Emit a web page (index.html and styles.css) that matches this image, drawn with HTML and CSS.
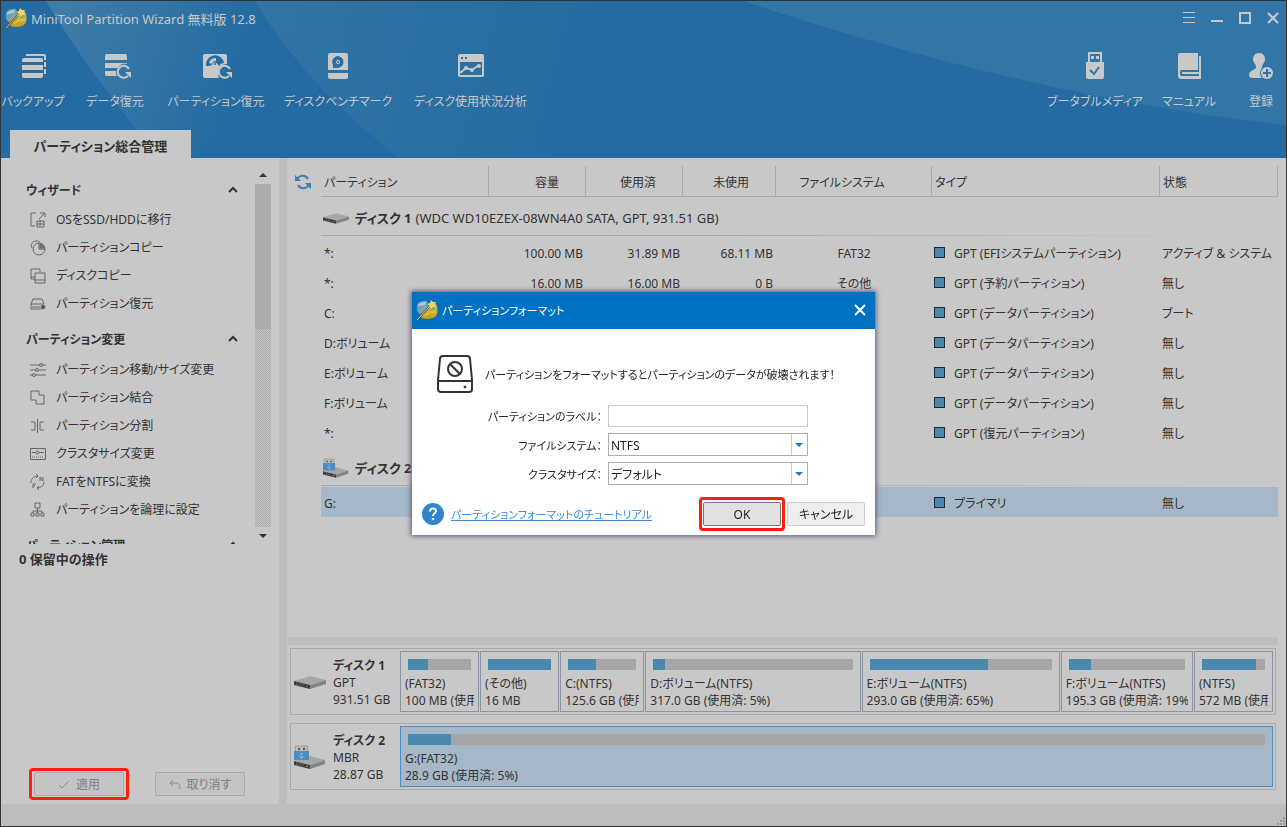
FILE: index.html
```html
<!DOCTYPE html>
<html lang="ja">
<head>
<meta charset="utf-8">
<title>MiniTool Partition Wizard 無料版 12.8</title>
<link rel="stylesheet" href="styles.css">
</head>
<body>
<svg class="defs" aria-hidden="true">
  <defs>
    <linearGradient id="sky" x1="0" y1="0" x2="1" y2="1"><stop offset="0" stop-color="#3e86b8"/><stop offset=".6" stop-color="#7fa9b4"/><stop offset="1" stop-color="#3a7aa0"/></linearGradient>
    <linearGradient id="gold" x1="0" y1="0" x2="0" y2="1"><stop offset="0" stop-color="#d8c653"/><stop offset="1" stop-color="#c79d10"/></linearGradient>
    <symbol id="logo" viewBox="0 0 22 22">
      <path d="M1 6c1-4 6-5 10-4l1 6-8 7C1 13 0 9 1 6z" fill="url(#sky)"/>
      <path d="M2 6c2-3 5-3 8-3l-1 3c-3 0-5 1-7 2z" fill="#a9cbe0"/>
      <path d="M5 14l7-7 8-2c2 4 2 9 0 12-3 3-10 4-14 2-2-1-2-3-1-5z" fill="url(#gold)"/>
      <path d="M14 9l5-2 1 3-5 2z" fill="#8fae60"/>
      <path d="M11 5l3-1 1-3 2 2 3 0-1 3 1 2-3 0-2 2-1-3z" fill="#ecd36d"/>
      <path d="M6 15l4 1 5-3 5 0" fill="none" stroke="#e4cf5c"/>
      <path d="M1 21L13 8" stroke="#4b4432" stroke-width="2"/><path d="M1 21L13 8" stroke="#d9d4be"/>
    </symbol>
    <symbol id="drive" viewBox="0 0 32 14">
      <path d="M0 6L16 1l16 4-16 5z" fill="#a7a7a7"/><path d="M0 6l16 4v4L0 10z" fill="#3c3c3c"/><path d="M16 10l16-5v4l-16 5z" fill="#848484"/>
      <path d="M2 7.500l8 2.500M2 9.500l8 2.500" stroke="#777" stroke-dasharray="1 1"/><path d="M12 11l2 .6" stroke="#4f8a3a"/>
    </symbol>
    <symbol id="usbdrive" viewBox="0 0 32 24">
      <path d="M0 16l16-5 15 4-15 5z" fill="#a7a7a7"/><path d="M0 16l16 4v4L0 20z" fill="#3c3c3c"/><path d="M16 20l15-5v4l-15 5z" fill="#848484"/>
      <path d="M2 17.500l8 2.500M2 19.500l8 2.500" stroke="#777" stroke-dasharray="1 1"/><path d="M12 21l2 .6" stroke="#4fae3a" stroke-width="1.500"/>
      <path d="M1.500 1h12v6h-12z" fill="#bcbcbc" stroke="#999"/><path d="M4 3h2v2H4zM9 3h2v2H9z" fill="#555"/>
      <path d="M0 6h15v9H0z" fill="#4b8dbe"/><path d="M7.500 14V8M5 11l2.500 2 2.500-2M6 8.500h3" fill="none" stroke="#86b4d6"/>
    </symbol>
    <symbol id="up" viewBox="0 0 10 7"><path d="M1 6l4-4 4 4" fill="none" stroke="#333" stroke-width="2"/></symbol>
  </defs>
</svg>

<div class="app">
  <header class="header">
    <svg class="rays" viewBox="0 0 1285 157" preserveAspectRatio="none" aria-hidden="true">
      <defs>
        <linearGradient id="r1" gradientUnits="userSpaceOnUse" x1="60" y1="0" x2="250" y2="60"><stop offset="0" stop-color="#407ca7"/><stop offset="1" stop-color="#236ba2"/></linearGradient>
        <linearGradient id="r2" gradientUnits="userSpaceOnUse" x1="270" y1="0" x2="600" y2="90"><stop offset="0" stop-color="#3174a4"/><stop offset="1" stop-color="#236ba2"/></linearGradient>
      </defs>
      <path d="M45 0C75 50 105 90 136 129l60 28L330 0z" fill="url(#r1)"/>
      <path d="M254 0c35 60 90 115 144 157h250L700 0z" fill="url(#r2)"/>
      <path d="M742 0C920 60 1110 105 1285 124V0z" fill="#3276a7"/>
    </svg>
    <div class="titlebar">
      <svg class="logo"><use href="#logo"/></svg>
      <h1 class="app-title">MiniTool Partition Wizard 無料版 12.8</h1>
      <div class="winctl">
        <button type="button" aria-label="メニュー"><svg viewBox="0 0 12 12"><path d="M0 .5h12M0 5.500h12M0 10.500h12" stroke="#c8c8c8"/></svg></button>
        <button type="button" aria-label="最小化"><svg viewBox="0 0 12 12"><path d="M0 9h12" stroke="#c8c8c8" stroke-width="2"/></svg></button>
        <button type="button" aria-label="最大化"><svg viewBox="0 0 12 12"><path d="M1 1h10v10H1z" fill="none" stroke="#c8c8c8" stroke-width="2"/></svg></button>
        <button type="button" aria-label="閉じる"><svg viewBox="0 0 12 12"><path d="M1 1l10 10M11 1L1 11" stroke="#c8c8c8" stroke-width="2"/></svg></button>
      </div>
    </div>
    <nav class="toolbar">
      <button type="button" class="tool w56"><svg viewBox="-3 0 32 28"><path d="M6 2h18a2 2 0 0 1 2 2v4h-2V4H6zM24 10h2v5h-2zM24 17h2v5h-2z"/><path d="M4 6h17a2 2 0 0 1 2 2v2H2V8a2 2 0 0 1 2-2zM2 13h21v5H2zM2 21h21v3a2 2 0 0 1-2 2H4a2 2 0 0 1-2-2z"/></svg><span>バックアップ</span></button>
      <button type="button" class="tool w58"><svg viewBox="-2 0 32 28"><path d="M6 2h18a2 2 0 0 1 2 2v4H4V4a2 2 0 0 1 2-2zM4 11h22v1c-4-1-7 0-9 4H4zM4 19h11c0 2 0 4 1 5H6a2 2 0 0 1-2-2z"/><path d="M27 24a6 6 0 1 1 1-7" fill="none" stroke="#c8c8c8" stroke-width="2"/><path d="M24 20h6v6z"/></svg><span>データ復元</span></button>
      <button type="button" class="tool w94"><svg viewBox="-2 0 32 28"><path d="M3 2h20a2 2 0 0 1 2 2v8c-5 0-9 3-9 8 0 3 0 5 1 6H3a2 2 0 0 1-2-2V4a2 2 0 0 1 2-2z"/><path d="M4 14a9 9 0 0 1 18-3c-2 0-4 1-5 3a4 4 0 0 0-7-1l-3 1z" fill="#246ca3"/><path d="M7 11c1-4 4-5 7-5v3c-2 0-3 1-4 3z"/><circle cx="13" cy="13" r="2.500"/><circle cx="13" cy="12" r="1" fill="#246ca3"/><path d="M27 24a6 6 0 1 1 1-7" fill="none" stroke="#c8c8c8" stroke-width="2"/><path d="M24 20h6v6z"/></svg><span>パーティション復元</span></button>
      <button type="button" class="tool w100"><svg viewBox="0 0 32 28"><path d="M8 1h16a2 2 0 0 1 2 2v15H6V3a2 2 0 0 1 2-2zM6 21h20v4a2 2 0 0 1-2 2H8a2 2 0 0 1-2-2z"/><path d="M16 4a6 6 0 1 1-1 12h-4v-3A6 6 0 0 1 16 4z" fill="#2a70a4"/><circle cx="16" cy="10" r="2"/><circle cx="16" cy="10" r="1" fill="#2a70a4"/></svg><span>ディスクベンチマーク</span></button>
      <button type="button" class="tool w115"><svg viewBox="0 0 32 28"><path d="M5 2h22a2 2 0 0 1 2 2v19a2 2 0 0 1-2 2H5a2 2 0 0 1-2-2V4a2 2 0 0 1 2-2z"/><path d="M5 10h22v13H5zM6 5h2v2H6zM10 5h2v2h-2z" fill="#2a70a4"/><path d="M5 21l6-5 6 2 7-5" fill="none" stroke="#c8c8c8" stroke-width="2"/><circle cx="11" cy="16" r="2"/><circle cx="17" cy="18" r="2"/><circle cx="24" cy="14" r="2"/></svg><span>ディスク使用状況分析</span></button>
      <button type="button" class="tool w86 push"><svg viewBox="0 0 32 28"><path d="M9 0h14v10h2v15a2 2 0 0 1-2 2H9a2 2 0 0 1-2-2V10h2z"/><path d="M11 2h10v8H11z" fill="#3276a7"/><path d="M12 4h3v3h-3zM17 4h3v3h-3z"/><path d="M11 18l4 4 5-7" fill="none" stroke="#3276a7" stroke-width="2"/></svg><span>ブータブルメディア</span></button>
      <button type="button" class="tool w52"><svg viewBox="0 0 32 28"><path d="M7 1h18v19h1V4h2v23H8a3 3 0 0 1-3-3V3a2 2 0 0 1 2-2z"/><path d="M8 18h17V1h1v23H8q-1 0-1-3t1-3z" fill="#3276a7"/><path d="M9 20h17v2H9z"/><path d="M24 1h1v17h-1z"/></svg><span>マニュアル</span></button>
      <button type="button" class="tool w28"><svg viewBox="0 0 32 28"><path d="M14 1c4 0 6 3 6 6 0 4-3 5-3 8l1 2c-2 2-3 5-1 9H8c-3 0-4-1-4-3 0-4 5-5 7-7 1-3-3-5-3-9 0-3 2-6 6-6z"/><circle cx="22" cy="21" r="7" fill="#3276a7"/><circle cx="22" cy="21" r="6"/><path d="M22 17v8M18 21h8" stroke="#3276a7" stroke-width="2"/></svg><span>登録</span></button>
    </nav>
    <div class="tabs"><button type="button" class="tab">パーティション総合管理</button></div>
  </header>

  <div class="body">
    <aside class="sidebar">
      <div class="scroller">
        <div class="groups">
          <section>
            <h2>ウィザード<svg class="up"><use href="#up"/></svg></h2>
            <a href="#"><svg viewBox="0 0 16 16"><path d="M6 1H1v13h4M9 7l5-5M10 1h5v4M7 9h7v6H7zM7 12h7M10 8v6"/></svg>OSをSSD/HDDに移行</a>
            <a href="#"><svg viewBox="0 0 16 16"><circle cx="9" cy="9" r="6"/><path d="M9 3v6h6M2 8C0 5 2 1 6 1c2 0 3 0 4 1"/><path d="M10 4l3 1 1 3h-4z" fill="#777"/></svg>パーティションコピー</a>
            <a href="#"><svg viewBox="0 0 16 16"><path d="M5 11H1V1h9v3M1 9h4M5 5h10v10H5zM5 12h10"/></svg>ディスクコピー</a>
            <a href="#"><svg viewBox="0 0 16 16"><path d="M11 13H1V8l2-5h9l2 5M1 8h12M3 10v2M5 10v2M7 10v2M9 10v2"/><circle cx="13" cy="11" r="2" fill="#555"/></svg>パーティション復元</a>
          </section>
          <section>
            <h2>パーティション変更<svg class="up"><use href="#up"/></svg></h2>
            <a href="#"><svg viewBox="0 0 16 16"><path d="M0 3h10M12 3h4M0 8h6M9 8h7M0 13h3M6 13h10"/><circle cx="11" cy="3" r="1.500"/><circle cx="7" cy="8" r="1.500"/><circle cx="4" cy="13" r="1.500"/></svg>パーティション移動/サイズ変更</a>
            <a href="#"><svg viewBox="0 0 16 16"><path d="M1 1h8v4h5v9H6v-4H1z"/></svg>パーティション結合</a>
            <a href="#"><svg viewBox="0 0 16 16"><path d="M7.500 1v14M1 4h4v8H1M14 4h-4v8h4"/></svg>パーティション分割</a>
            <a href="#"><svg viewBox="0 0 16 16"><path d="M.5 2.500h15v11H.5zM2 6.500h4M9 6.500h5"/><circle cx="7.500" cy="6.500" r="1.500"/><path d="M2 11h12" stroke-dasharray="1 1"/></svg>クラスタサイズ変更</a>
            <a href="#"><svg viewBox="0 0 16 16"><path d="M1 9c0-4 2-6 6-7M6 0l2 2-2 2M14 8c0 3-2 5-6 6M9 12l-2 2 2 2M10 7V3l3 4V3M3 14v-4h3M3 12h2"/></svg>FATをNTFSに変換</a>
            <a href="#"><svg viewBox="0 0 16 16"><path d="M5 1h5v5H5zM7.500 6v3M3 11V9h9v2M1 11h3v3H1zM6 11h3v3H6zM11 11h3v3h-3zM7.500 9v2"/></svg>パーティションを論理に設定</a>
          </section>
          <section>
            <h2>パーティション管理<svg class="up"><use href="#up"/></svg></h2>
          </section>
        </div>
        <div class="scrollbar">
          <svg viewBox="0 0 8 5"><path d="M0 5l4-4 4 4z"/></svg>
          <div class="track"><div class="thumb"></div></div>
          <svg viewBox="0 0 8 5"><path d="M0 0l4 4 4-4z"/></svg>
        </div>
      </div>
      <h2 class="pending">0 保留中の操作</h2>
      <div class="actions">
        <div class="mark"><button type="button" class="btn" disabled><svg viewBox="0 0 12 12"><path d="M1 6l3 3 7-7"/></svg>適用</button></div>
        <button type="button" class="btn" disabled><svg viewBox="0 0 12 12"><path d="M4 1L1 4l3 3M1 4h6c3 0 4 2 4 6"/></svg>取り消す</button>
      </div>
    </aside>
    <div class="vsplit"></div>
    <main class="main">
      <div class="list">
        <button type="button" class="refresh" aria-label="更新"><svg viewBox="0 0 16 16"><path d="M2 6a6 6 0 0 1 11-1M14 10a6 6 0 0 1-11 1" fill="none" stroke="#3a7fb0" stroke-width="2"/><path d="M0 1v6h6zM16 15V9h-6z" fill="#3a7fb0"/></svg></button>
        <table class="parts">
          <colgroup><col class="c-name"><col class="c-num"><col class="c-num"><col class="c-free"><col class="c-fs"><col><col class="c-st"></colgroup>
          <thead><tr><th>パーティション</th><th class="r">容量</th><th class="r">使用済</th><th class="r">未使用</th><th class="fsh">ファイルシステム</th><th>タイプ</th><th>状態</th></tr></thead>
          <tbody>
            <tr class="disk"><td colspan="7"><div class="disk-line"><svg><use href="#drive"/></svg><b>ディスク 1</b><span>(WDC WD10EZEX-08WN4A0 SATA, GPT, 931.51 GB)</span></div></td></tr>
            <tr><td>*:</td><td class="r">100.00 MB</td><td class="r">31.89 MB</td><td class="r">68.11 MB</td><td class="c">FAT32</td><td><i class="sq"></i>GPT (EFIシステムパーティション)</td><td>アクティブ &amp; システム</td></tr>
            <tr><td>*:</td><td class="r">16.00 MB</td><td class="r">16.00 MB</td><td class="r">0 B</td><td class="c">その他</td><td><i class="sq"></i>GPT (予約パーティション)</td><td>無し</td></tr>
            <tr><td>C:</td><td></td><td></td><td></td><td></td><td><i class="sq"></i>GPT (データパーティション)</td><td>ブート</td></tr>
            <tr><td>D:ボリューム</td><td></td><td></td><td></td><td></td><td><i class="sq"></i>GPT (データパーティション)</td><td>無し</td></tr>
            <tr><td>E:ボリューム</td><td></td><td></td><td></td><td></td><td><i class="sq"></i>GPT (データパーティション)</td><td>無し</td></tr>
            <tr><td>F:ボリューム</td><td></td><td></td><td></td><td></td><td><i class="sq"></i>GPT (データパーティション)</td><td>無し</td></tr>
            <tr><td>*:</td><td></td><td></td><td></td><td></td><td><i class="sq"></i>GPT (復元パーティション)</td><td>無し</td></tr>
            <tr class="disk"><td colspan="7"><div class="disk-line"><svg class="usb"><use href="#usbdrive"/></svg><b>ディスク 2</b></div></td></tr>
            <tr class="sel"><td>G:</td><td></td><td></td><td></td><td></td><td><i class="sq"></i>プライマリ</td><td>無し</td></tr>
          </tbody>
        </table>
      </div>
      <div class="hsplit"></div>
      <div class="map">
        <div class="mapdisk">
          <svg class="mi" viewBox="0 0 32 14"><use href="#drive"/></svg>
          <div class="info"><b>ディスク 1</b><span>GPT</span><span>931.51 GB</span></div>
          <div class="blocks">
            <div class="block" style="flex-grow:69"><div class="bar"><div class="used" style="width:32%"></div></div><span>(FAT32)</span><span>100 MB (使用済: 32%)</span></div>
            <div class="block" style="flex-grow:69"><div class="bar"><div class="used" style="width:100%"></div></div><span>(その他)</span><span>16 MB</span></div>
            <div class="block" style="flex-grow:74"><div class="bar"><div class="used" style="width:41%"></div></div><span>C:(NTFS)</span><span>125.6 GB (使用済: 41%)</span></div>
            <div class="block" style="flex-grow:205"><div class="bar"><div class="used" style="width:6%"></div></div><span>D:ボリューム(NTFS)</span><span>317.0 GB (使用済: 5%)</span></div>
            <div class="block" style="flex-grow:188"><div class="bar"><div class="used" style="width:65%"></div></div><span>E:ボリューム(NTFS)</span><span>293.0 GB (使用済: 65%)</span></div>
            <div class="block" style="flex-grow:122"><div class="bar"><div class="used" style="width:19%"></div></div><span>F:ボリューム(NTFS)</span><span>195.3 GB (使用済: 19%)</span></div>
            <div class="block" style="flex-grow:69"><div class="bar"><div class="used" style="width:85%"></div></div><span>(NTFS)</span><span>572 MB (使用済: 85%)</span></div>
          </div>
        </div>
        <div class="mapdisk">
          <svg class="mi usb" viewBox="0 0 32 24"><use href="#usbdrive"/></svg>
          <div class="info"><b>ディスク 2</b><span>MBR</span><span>28.87 GB</span></div>
          <div class="blocks">
            <div class="block on"><div class="bar"><div class="used" style="width:5%"></div></div><span>G:(FAT32)</span><span>28.9 GB (使用済: 5%)</span></div>
          </div>
        </div>
      </div>
    </main>
  </div>
  <footer class="status"><svg viewBox="0 0 9 9"><path d="M6 0h2v2H6zM3 3h2v2H3zM6 3h2v2H6zM0 6h2v2H0zM3 6h2v2H3zM6 6h2v2H6z" fill="#999"/></svg></footer>
</div>

<div class="overlay">
  <div class="dialog" role="dialog" aria-labelledby="dlg-title">
    <div class="dlg-head">
      <svg class="logo"><use href="#logo"/></svg>
      <h2 id="dlg-title">パーティションフォーマット</h2>
      <button type="button" class="close" aria-label="閉じる"><svg viewBox="0 0 12 12"><path d="M1 1l10 10M11 1L1 11" stroke="#fff" stroke-width="2"/></svg></button>
    </div>
    <form class="dlg-body">
      <div class="warn">
        <svg viewBox="0 0 36 38" fill="none" stroke="#333" stroke-width="2"><path d="M6 1h24q3 0 3 3l2 21v9q0 3-3 3H4q-3 0-3-3v-9L3 4q0-3 3-3zM1 26h34"/><circle cx="18" cy="14" r="7"/><path d="M13 9l10 10"/><circle cx="28" cy="32" r="1" fill="#333" stroke-width="1"/></svg>
        <p>パーティションをフォーマットするとパーティションのデータが破壊されます！</p>
      </div>
      <div class="fields">
        <label for="lb">パーティションのラベル：</label><input id="lb" type="text">
        <label for="fs">ファイルシステム：</label><div class="combo"><select id="fs"><option>NTFS</option></select></div>
        <label for="cl">クラスタサイズ：</label><div class="combo"><select id="cl"><option>デフォルト</option></select></div>
      </div>
      <div class="dlg-foot">
        <svg class="help" viewBox="0 0 22 22"><circle cx="11" cy="11" r="11" fill="#3184cb"/><path d="M8 8.500c0-4 6-4 6-.5 0 2.500-3 2-3 5" fill="none" stroke="#fff" stroke-width="2"/><circle cx="11" cy="16" r="1.300" fill="#fff"/></svg>
        <a href="#">パーティションフォーマットのチュートリアル</a>
        <div class="mark ok"><button type="button" class="btn def">OK</button></div>
        <button type="button" class="btn lite">キャンセル</button>
      </div>
    </form>
  </div>
</div>
</body>
</html>
```
FILE: styles.css
```css
* { box-sizing: border-box; }
body {
  margin: 0;
  font: 12px/18px "Noto Sans", "Noto Sans CJK JP", sans-serif;
  font-feature-settings: "palt";
  color: #333;
  background: #c8c8c8;
}
button, input, select { font: inherit; font-feature-settings: inherit; color: inherit; margin: 0; padding: 0; border: 0; background: none; }
h1, h2, p { margin: 0; font-size: 12px; font-weight: 400; }
svg { display: block; flex: none; }
.defs { position: absolute; width: 0; height: 0; }

.app { min-height: 100vh; display: flex; flex-direction: column; border: 1px solid #333; }

/* header */
.header { position: relative; background: #236ba2; color: #c8c8c8; height: 157px; display: flex; flex-direction: column; }
.rays { position: absolute; inset: 0; width: 100%; height: 100%; }
.titlebar, .toolbar, .tabs { position: relative; display: flex; }
.titlebar { height: 34px; align-items: center; padding: 0 7px 0 4px; gap: 4px; }
.app-title { font-size: 13px; padding-top: 2px; }
.logo { width: 22px; height: 22px; }
.winctl { margin-left: auto; display: flex; gap: 16px; }
.winctl svg { width: 12px; height: 12px; }
.toolbar { padding: 17px 11px 0 4px; gap: 25px; flex: 1; align-items: flex-start; }
.tool { display: flex; flex-direction: column; align-items: center; gap: 13px; white-space: nowrap; }
.tool svg { width: 32px; height: 28px; fill: #c8c8c8; }
.w28 { width: 28px; margin-left: 7px; }
.w52 { width: 52px; }
.w56 { width: 56px; }
.w58 { width: 58px; }
.w86 { width: 86px; }
.w94 { width: 94px; }
.w100 { width: 100px; }
.w115 { width: 115px; }
.push { margin-left: auto; }
.tabs { padding-left: 9px; }
.tab { width: 181px; height: 28px; padding-top: 3px; background: #c8c8c8; color: #333; font-size: 13px; font-weight: 700; white-space: nowrap; }

.body { flex: 1; display: flex; }

/* sidebar */
.sidebar { width: 278px; flex: none; display: flex; flex-direction: column; }
.scroller { height: 386px; display: flex; overflow: hidden; }
.groups { flex: 1; padding: 19px 17px 0 25px; overflow: hidden; }
.groups section { margin-bottom: 8px; }
.groups h2 { display: flex; justify-content: space-between; align-items: center; height: 28px; font-weight: 700; font-size: 12px; }
.groups .up { width: 10px; height: 7px; margin-bottom: 3px; }
.groups section + section h2 { height: 30px; }
.groups a { display: flex; align-items: center; gap: 10px; height: 28px; padding: 1px 0 0 4px; color: inherit; text-decoration: none; white-space: nowrap; }
.groups a svg { width: 16px; height: 16px; fill: none; stroke: #666; }
.scrollbar { width: 16px; margin-right: 8px; display: flex; flex-direction: column; align-items: center; padding: 14px 0 5px; gap: 7px; }
.scrollbar svg { width: 8px; height: 5px; fill: #333; }
.track { flex: 1; width: 16px; background: repeating-conic-gradient(#adadad 0 25%, #c3c3c3 0 50%) 0 0 / 2px 2px; }
.thumb { height: 145px; background: #ababab; }
.pending { padding: 6px 18px; font-weight: 700; font-size: 13px; }
.actions { margin-top: auto; display: flex; align-items: center; gap: 26px; padding: 0 0 4px 28px; }
.mark { border: 3px solid #ff1e0f; border-radius: 4px; padding: 1px 2px; }
.btn { display: flex; align-items: center; justify-content: center; gap: 6px; width: 90px; height: 24px; padding-top: 2px; border: 1px solid #a9a9a9; border-radius: 2px; background: #c4c4c4; white-space: nowrap; }
.btn:disabled { color: #808080; }
.btn svg { width: 12px; height: 12px; fill: none; stroke: #888; stroke-width: 1; }
.vsplit { width: 8px; background: #bdbdbd; }

/* partition list */
.main { flex: 1; min-width: 0; display: flex; flex-direction: column; }
.list { flex: 1; display: flex; align-items: flex-start; padding: 8px 8px 0 8px; }
.refresh { width: 16px; margin: 8px 10px 0 0; }
.refresh svg { width: 16px; height: 16px; }
.parts { flex: 1; width: 100%; table-layout: fixed; border-collapse: separate; border-spacing: 0; white-space: nowrap; }
.c-name { width: 168px; }
.c-num { width: 97px; }
.c-free { width: 93px; }
.c-fs { width: 156px; }
.c-st { width: 118px; }
.parts th { height: 31px; padding: 4px 4px 0 3px; font-weight: 400; text-align: left; border-right: 1px solid #a8a8a8; border-bottom: 1px solid #a8a8a8; }
.parts th.r { text-align: right; padding-right: 26px; }
.parts th.fsh { text-align: center; padding-right: 26px; }
.parts td { height: 30px; padding: 4px 3px 0; }
.parts td + td + td + td + td + td + td { padding-left: 2px; }
.parts .r { text-align: right; }
.parts .c { text-align: center; }
.parts .disk td { height: 40px; padding: 2px 2px 0; background: linear-gradient(90deg, #a8a8a8 40%, #c8c8c8 95%) 0 38px / 100% 1px no-repeat; }
.disk-line { display: flex; align-items: center; }
.disk-line svg { width: 26px; height: 12px; margin-right: 6px; }
.disk-line svg.usb { height: 20px; }
.disk-line b { margin-right: 4px; }
.disk-line b, .disk-line span { font-size: 13px; }
.sq { display: inline-block; width: 11px; height: 11px; margin: 0 9px 0 -1px; border: 1px solid #1c2a33; background: #4b88ae; }
.sel { background: #a6b8c8; }

.hsplit { height: 8px; margin: 0 8px 0 1px; background: #bdbdbd; }

/* disk map */
.map { display: flex; flex-direction: column; gap: 8px; padding: 3px 10px 14px 3px; }
.mapdisk { display: flex; align-items: center; border: 1px solid #a9a9ac; padding: 2px 2px 2px 3px; }
.mi { width: 32px; height: 14px; }
.mi.usb { height: 24px; }
.info { width: 74px; padding: 2px 0 0 7px; display: flex; flex-direction: column; line-height: 17px; white-space: nowrap; }
.info b { font-size: 12px; }
.blocks { flex: 1; min-width: 0; display: flex; gap: 1px; }
.block { flex: 1 1 0; min-width: 0; height: 61px; border: 1px solid #8a94a3; padding: 7px 4px 0; display: flex; flex-direction: column; line-height: 17px; overflow: hidden; white-space: nowrap; }
.block span { overflow: hidden; }
.block.on { border-color: #4a8fc4; background: #a6b8c8; }
.bar { height: 11px; margin: 0 3px 5px; background: #a6a6a6; }
.used { height: 11px; background: #4b88ae; }

.status { height: 22px; background: #bdbdbd; display: flex; justify-content: flex-end; align-items: flex-end; }
.status svg { width: 9px; height: 9px; }

/* dialog */
.overlay { position: fixed; inset: 0; display: flex; align-items: center; justify-content: center; }
.dialog { width: 463px; background: #fff; color: #222; box-shadow: 0 0 5px 1px #55597a; }
.dlg-head { height: 37px; display: flex; align-items: center; gap: 4px; padding: 0 9px 2px 4px; background: #0070c1; color: #fff; }
.dlg-head h2, .warn p, .fields label, .dlg-foot a { font-size: 11px; padding-top: 2px; }
.close { margin-left: auto; }
.close svg { width: 12px; height: 12px; }
.dlg-body { padding: 26px 10px 4px 10px; }
.warn { display: flex; align-items: center; gap: 12px; padding-left: 15px; white-space: nowrap; }
.warn svg { width: 36px; height: 38px; }
.fields { display: grid; grid-template-columns: 174px 200px; align-items: center; gap: 6px; padding: 12px 0 12px 6px; }
.fields label { text-align: right; white-space: nowrap; }
.fields input { width: 100%; height: 22px; border: 1px solid #ccc; padding: 0 3px; }
.combo { position: relative; display: grid; }
.combo select { appearance: none; height: 23px; border: 1px solid #adadb3; border-radius: 0; padding: 2px 20px 0 2px; background: #fff; }
.combo::before { content: ""; position: absolute; right: 16px; top: 1px; bottom: 1px; border-left: 1px solid #ccc; }
.combo::after { content: ""; position: absolute; right: 5px; top: 10px; border: 4px solid transparent; border-top-color: #1f78c8; border-bottom: 0; }
.dlg-foot { display: flex; align-items: center; }
.help { width: 22px; height: 22px; margin-right: 7px; }
.dlg-foot a { color: #3a8bdd; white-space: nowrap; }
.mark.ok { margin: 0 2px 0 auto; padding: 2px 1px; }
.mark.ok + .btn, .mark.ok .btn { width: 78px; }
.btn.def { background: #e1e1e1; border-color: #77777f; }
.btn.lite { background: #eee; border-color: #ccc; }
```
